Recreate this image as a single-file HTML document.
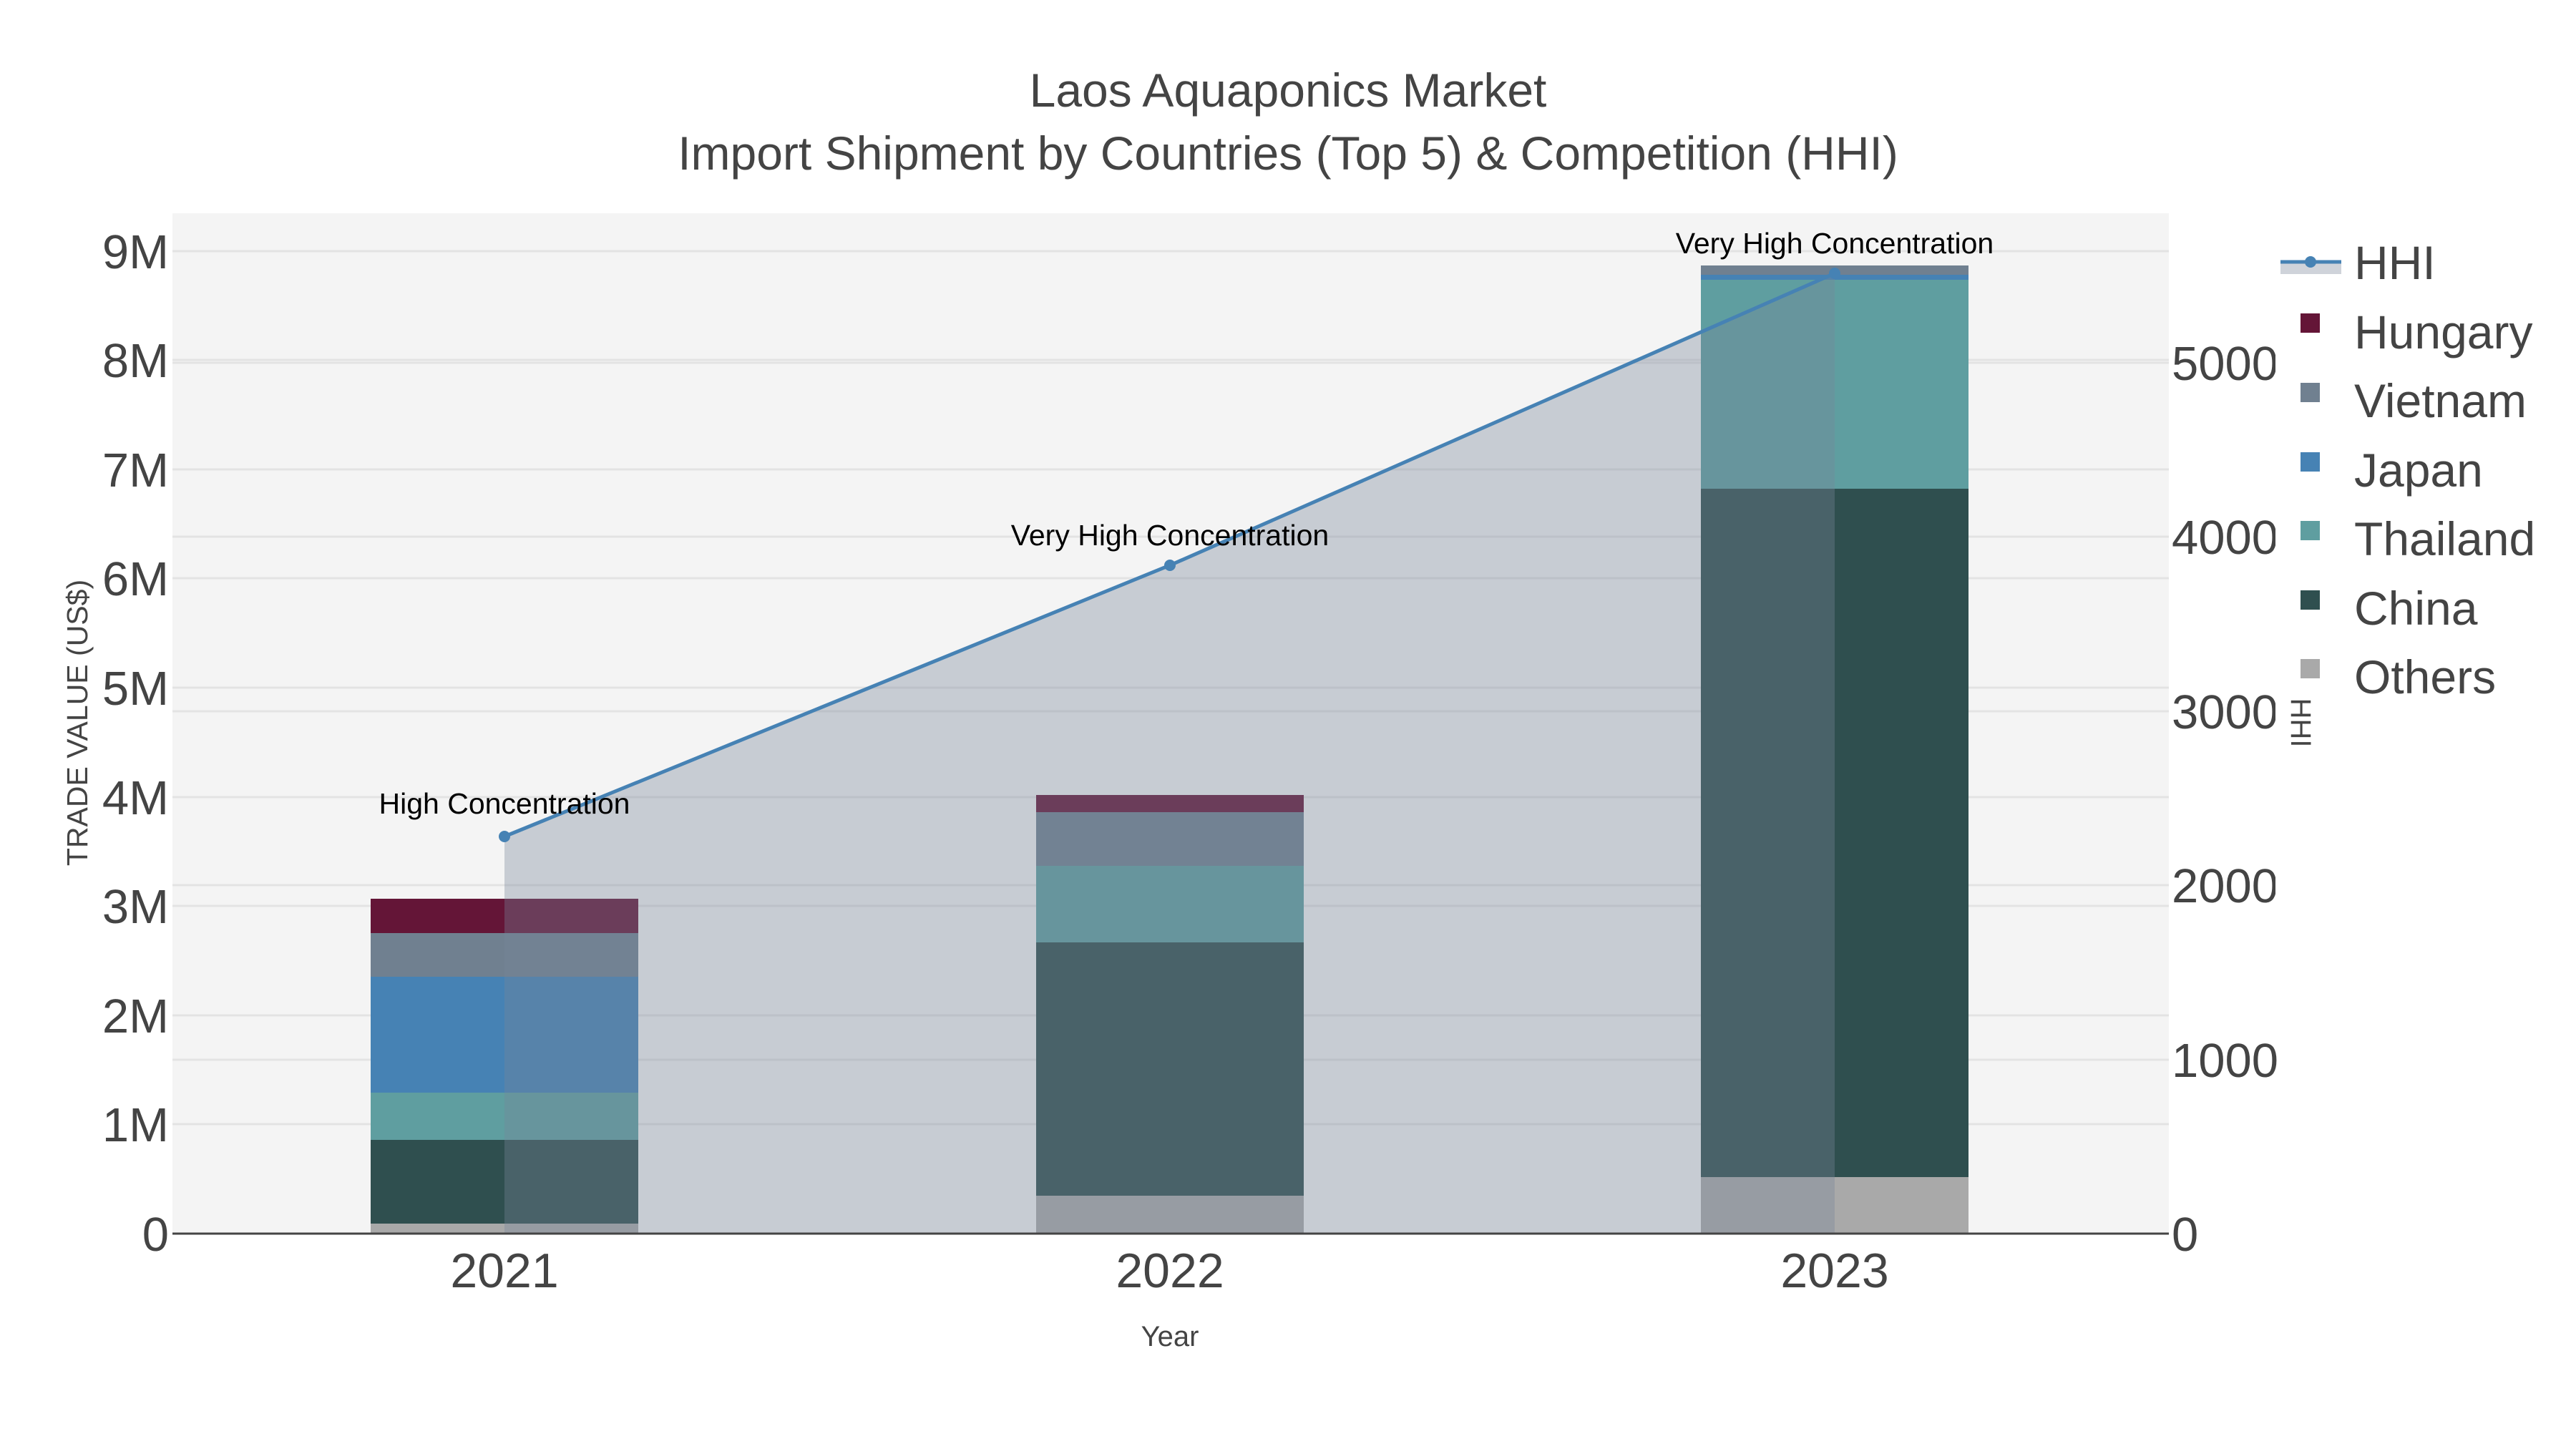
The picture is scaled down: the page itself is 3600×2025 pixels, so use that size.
<!DOCTYPE html>
<html><head><meta charset="utf-8"><style>
html,body{margin:0;padding:0;background:#fff;}
svg{display:block;font-family:"Liberation Sans",sans-serif;}
</style></head><body>
<svg width="3600" height="2025" viewBox="0 0 3600 2025" xmlns="http://www.w3.org/2000/svg">
<rect width="3600" height="2025" fill="#fff"/>
<rect x="241" y="298" width="2790" height="1426" fill="#f4f4f4"/>
<g stroke="#e3e3e3" stroke-width="3">
<line x1="241" x2="3031" y1="1571" y2="1571"/><line x1="241" x2="3031" y1="1419" y2="1419"/>
<line x1="241" x2="3031" y1="1266" y2="1266"/><line x1="241" x2="3031" y1="1114" y2="1114"/>
<line x1="241" x2="3031" y1="961" y2="961"/><line x1="241" x2="3031" y1="808" y2="808"/>
<line x1="241" x2="3031" y1="656" y2="656"/><line x1="241" x2="3031" y1="503" y2="503"/>
<line x1="241" x2="3031" y1="351" y2="351"/>
<line x1="241" x2="3031" y1="1481" y2="1481"/><line x1="241" x2="3031" y1="1237" y2="1237"/>
<line x1="241" x2="3031" y1="994" y2="994"/><line x1="241" x2="3031" y1="750" y2="750"/>
<line x1="241" x2="3031" y1="507" y2="507"/>
</g>
<rect x="518" y="1710" width="374" height="14" fill="#a9a9a9"/>
<rect x="518" y="1593" width="374" height="117" fill="#2f4f4f"/>
<rect x="518" y="1527" width="374" height="66" fill="#5f9ea0"/>
<rect x="518" y="1365" width="374" height="162" fill="#4682b4"/>
<rect x="518" y="1304" width="374" height="61" fill="#708090"/>
<rect x="518" y="1256" width="374" height="48" fill="#641537"/>
<rect x="1448" y="1671" width="374" height="53" fill="#a9a9a9"/>
<rect x="1448" y="1317" width="374" height="354" fill="#2f4f4f"/>
<rect x="1448" y="1210" width="374" height="107" fill="#5f9ea0"/>
<rect x="1448" y="1135" width="374" height="75" fill="#708090"/>
<rect x="1448" y="1111" width="374" height="24" fill="#641537"/>
<rect x="2377" y="1645" width="374" height="79" fill="#a9a9a9"/>
<rect x="2377" y="683" width="374" height="962" fill="#2f4f4f"/>
<rect x="2377" y="391" width="374" height="292" fill="#5f9ea0"/>
<rect x="2377" y="384" width="374" height="7" fill="#4682b4"/>
<rect x="2377" y="371" width="374" height="13" fill="#708090"/>
<polygon points="705,1169 1635,790 2564,382 2564,1724 705,1724" fill="rgb(120,134,153)" fill-opacity="0.36"/>
<polyline points="705,1169 1635,790 2564,382" fill="none" stroke="#4682b4" stroke-width="5"/>
<circle cx="705" cy="1169" r="8" fill="#4682b4"/><circle cx="1635" cy="790" r="8" fill="#4682b4"/><circle cx="2564" cy="382" r="8" fill="#4682b4"/>
<line x1="241" x2="3031" y1="1724" y2="1724" stroke="#444" stroke-width="3"/>
<g fill="#444" text-anchor="middle" font-size="66">
<text x="1800" y="149">Laos Aquaponics Market</text>
<text x="1800" y="237">Import Shipment by Countries (Top 5) &amp; Competition (HHI)</text>
</g>
<g fill="#444" text-anchor="end" font-size="67">
<text x="236" y="1748">0</text><text x="236" y="1595">1M</text><text x="236" y="1443">2M</text>
<text x="236" y="1290">3M</text><text x="236" y="1138">4M</text><text x="236" y="985">5M</text>
<text x="236" y="832">6M</text><text x="236" y="680">7M</text><text x="236" y="527">8M</text>
<text x="236" y="375">9M</text>
</g>
<g fill="#444" font-size="67">
<text x="3035" y="1748">0</text><text x="3035" y="1505">1000</text><text x="3035" y="1261">2000</text>
<text x="3035" y="1018">3000</text><text x="3035" y="774">4000</text><text x="3035" y="531">5000</text>
</g>
<rect x="3180" y="300" width="420" height="1000" fill="#fff"/>
<g fill="#444" text-anchor="middle" font-size="68">
<text x="705" y="1799">2021</text><text x="1635" y="1799">2022</text><text x="2564" y="1799">2023</text>
</g>
<text x="1635" y="1881" fill="#444" font-size="40" text-anchor="middle">Year</text>
<text transform="translate(122,1010) rotate(-90)" fill="#444" font-size="41" text-anchor="middle">TRADE VALUE (US$)</text>
<text transform="translate(3202,1010) rotate(90)" fill="#444" font-size="40" text-anchor="middle">HHI</text>
<g fill="#000" font-size="41" text-anchor="middle">
<text x="705" y="1137">High Concentration</text>
<text x="1635" y="762">Very High Concentration</text>
<text x="2564" y="354">Very High Concentration</text>
</g>
<rect x="3187" y="367" width="85" height="16" fill="#cfd3da"/>
<line x1="3187" x2="3272" y1="366" y2="366" stroke="#4682b4" stroke-width="5"/>
<circle cx="3229" cy="366" r="8" fill="#4682b4"/>
<rect x="3215" y="438" width="27" height="27" fill="#641537"/>
<rect x="3215" y="535" width="27" height="27" fill="#708090"/>
<rect x="3215" y="632" width="27" height="27" fill="#4682b4"/>
<rect x="3215" y="728" width="27" height="27" fill="#5f9ea0"/>
<rect x="3215" y="825" width="27" height="27" fill="#2f4f4f"/>
<rect x="3215" y="921" width="27" height="27" fill="#a9a9a9"/>
<g fill="#444" font-size="66">
<text x="3290" y="390">HHI</text><text x="3290" y="487">Hungary</text><text x="3290" y="583">Vietnam</text>
<text x="3290" y="680">Japan</text><text x="3290" y="776">Thailand</text><text x="3290" y="873">China</text>
<text x="3290" y="969">Others</text>
</g>
</svg>
</body></html>
